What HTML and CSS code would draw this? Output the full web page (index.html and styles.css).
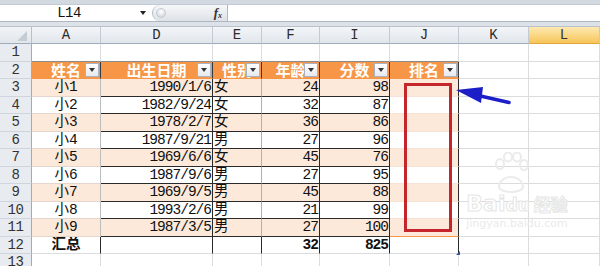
FILE: index.html
```html
<!DOCTYPE html>
<html>
<head>
<meta charset="utf-8">
<link rel="stylesheet" href="styles.css">
</head>
<body>
<div class="app">
  <div class="strip"></div>
  <div class="fbar">
    <div class="namebox">L14</div>
    <div class="nbarrow"><span class="tri"></span></div>
    <div class="fxcap"><span class="grip"></span><span class="fx">f<sub>x</sub></span></div>
    <div class="finput"></div>
  </div>
  <div class="gap"></div>
  <div class="sheet">
    <div class="corner"></div><div class="ch">A</div><div class="ch">D</div><div class="ch">E</div><div class="ch">F</div><div class="ch">I</div><div class="ch">J</div><div class="ch">K</div><div class="ch sel">L</div>

    <div class="rh">1</div><div class="c tt"></div><div class="c tt"></div><div class="c tt"></div><div class="c tt"></div><div class="c tt"></div><div class="c tt"></div><div class="c"></div><div class="c"></div>

    <div class="rh">2</div>
    <div class="c th"><span class="tht">姓名</span><span class="dd"></span></div>
    <div class="c th"><span class="tht">出生日期</span><span class="dd"></span></div>
    <div class="c th"><span class="tht">性别</span><span class="dd"></span></div>
    <div class="c th"><span class="tht">年龄</span><span class="dd"></span></div>
    <div class="c th"><span class="tht">分数</span><span class="dd"></span></div>
    <div class="c th"><span class="tht">排名</span><span class="dd"></span></div>
    <div class="c"></div><div class="c"></div>

    <div class="rh">3</div><div class="c ta band m">小1</div><div class="c td band r">1990/1/6</div><div class="c te band l">女</div><div class="c td band r">24</div><div class="c td band r">98</div><div class="c tj band"></div><div class="c"></div><div class="c"></div>
    <div class="rh">4</div><div class="c ta m">小2</div><div class="c td r">1982/9/24</div><div class="c te l">女</div><div class="c td r">32</div><div class="c td r">87</div><div class="c tj"></div><div class="c"></div><div class="c"></div>
    <div class="rh">5</div><div class="c ta band m">小3</div><div class="c td band r">1978/2/7</div><div class="c te band l">女</div><div class="c td band r">36</div><div class="c td band r">86</div><div class="c tj band"></div><div class="c"></div><div class="c"></div>
    <div class="rh">6</div><div class="c ta m">小4</div><div class="c td r">1987/9/21</div><div class="c te l">男</div><div class="c td r">27</div><div class="c td r">96</div><div class="c tj"></div><div class="c"></div><div class="c"></div>
    <div class="rh">7</div><div class="c ta band m">小5</div><div class="c td band r">1969/6/6</div><div class="c te band l">女</div><div class="c td band r">45</div><div class="c td band r">76</div><div class="c tj band"></div><div class="c"></div><div class="c"></div>
    <div class="rh">8</div><div class="c ta m">小6</div><div class="c td r">1987/9/6</div><div class="c te l">男</div><div class="c td r">27</div><div class="c td r">95</div><div class="c tj"></div><div class="c"></div><div class="c"></div>
    <div class="rh">9</div><div class="c ta band m">小7</div><div class="c td band r">1969/9/5</div><div class="c te band l">男</div><div class="c td band r">45</div><div class="c td band r">88</div><div class="c tj band"></div><div class="c"></div><div class="c"></div>
    <div class="rh">10</div><div class="c ta m">小8</div><div class="c td r">1993/2/6</div><div class="c te l">男</div><div class="c td r">21</div><div class="c td r">99</div><div class="c tj"></div><div class="c"></div><div class="c"></div>
    <div class="rh">11</div><div class="c ta band m">小9</div><div class="c td band r">1987/3/5</div><div class="c te band l">男</div><div class="c td band r">27</div><div class="c td band r">100</div><div class="c tj band last"></div><div class="c"></div><div class="c"></div>

    <div class="rh">12</div><div class="c tot m dk">汇总</div><div class="c tot dk"></div><div class="c tot dk"></div><div class="c tot r dk">32</div><div class="c tot r dk">825</div><div class="c tot dk"></div><div class="c"></div><div class="c"></div>

    <div class="rh">13</div><div class="c"></div><div class="c"></div><div class="c"></div><div class="c"></div><div class="c"></div><div class="c"></div><div class="c"></div><div class="c"></div>
  </div>

  <div class="redbox"></div>
  <svg class="arrow" width="60" height="24" viewBox="0 0 60 24">
    <polygon points="0,5 27,2 25,18" fill="#1c1fc8"/>
    <line x1="20" y1="10" x2="53" y2="17.5" stroke="#1c1fc8" stroke-width="3.5" stroke-linecap="round"/>
  </svg>
  <div class="handle"></div>
  <div class="wm">
    <svg class="paw" width="40" height="46" viewBox="0 0 40 46">
      <g fill="none" stroke="#ebebeb" stroke-width="2">
        <ellipse cx="9" cy="12" rx="4" ry="5"/>
        <ellipse cx="17" cy="5" rx="4" ry="4.5"/>
        <ellipse cx="26" cy="5" rx="4" ry="4.5"/>
        <ellipse cx="33" cy="13" rx="4" ry="5"/>
        <path d="M8 34 C10 22, 30 22, 32 34 C33 42, 7 42, 8 34 Z"/>
      </g>
    </svg>
    <div class="wm1">Bai<span class="du">du</span><span class="jy">经验</span></div>
    <div class="wm2">jingyan.baidu.com</div>
  </div>
</div>
</body>
</html>
```
FILE: styles.css
```css
html, body {
  margin: 0;
  padding: 0;
}
body {
  width: 600px;
  height: 266px;
  overflow: hidden;
  background: #fff;
  font-family: "Liberation Mono", "Noto Sans CJK SC", monospace;
}
.app {
  position: relative;
  width: 600px;
  height: 266px;
  overflow: hidden;
  background: #d9dee5;
}
.strip {
  height: 4px;
  background: #d3d9e1;
}
.fbar {
  display: flex;
  height: 18px;
  box-sizing: border-box;
  background: #fff;
  border-top: 1px solid #c3cad3;
  border-bottom: 1px solid #aeb7c2;
}
.namebox {
  width: 138px;
  display: flex;
  align-items: center;
  justify-content: center;
  font-size: 14px;
  color: #111;
  letter-spacing: -0.5px;
}
.nbarrow {
  width: 14px;
  display: flex;
  align-items: center;
  justify-content: center;
}
.tri {
  width: 0;
  height: 0;
  border-left: 3px solid transparent;
  border-right: 3px solid transparent;
  border-top: 4px solid #222;
  margin-right: 4px;
}
.fxcap {
  width: 75px;
  display: flex;
  align-items: center;
  justify-content: space-between;
  border-radius: 9px 0 0 9px;
  background: linear-gradient(#f6f7f9, #dde2e8);
  border-left: 1px solid #b3bcc7;
  box-sizing: border-box;
  padding: 0 5px 0 3px;
}
.grip {
  width: 8px;
  height: 8px;
  border-radius: 50%;
  background: radial-gradient(circle at 50% 35%, #ffffff, #c9cfd6);
  border: 1px solid #c4cad2;
}
.fx {
  font-family: "Liberation Serif", serif;
  font-style: italic;
  font-weight: bold;
  font-size: 13px;
  line-height: 1;
  color: #333;
}
.fx sub {
  font-size: 8px;
  vertical-align: -1px;
}
.finput {
  flex: 1;
  border-left: 1px solid #aeb7c2;
  background: #fff;
}
.gap {
  height: 5px;
  background: #dde2e8;
  border-bottom: 1px solid #b9c1cb;
  box-sizing: border-box;
}
.sheet {
  display: grid;
  grid-template-columns: 32px 69px 112px 49px 58px 70px 69px 70px 71px;
  grid-template-rows: 17px repeat(13, 17.5px);
  background: #fff;
}
.sheet > div {
  box-sizing: border-box;
  position: relative;
  display: flex;
  align-items: center;
  white-space: nowrap;
  overflow: hidden;
  line-height: 1;
}
.corner {
  background: linear-gradient(#f1f3f6, #e2e6ec);
  border-right: 1px solid #b8c0ca;
  border-bottom: 1px solid #9eabb9;
}
.corner::after {
  content: "";
  position: absolute;
  right: 4px;
  bottom: 2px;
  width: 0;
  height: 0;
  border-left: 10px solid transparent;
  border-bottom: 10px solid #c6ccd4;
}
.ch {
  justify-content: center;
  font-size: 14px;
  color: #2b2b2b;
  background: linear-gradient(#f3f5f8, #e1e6ec);
  border-right: 1px solid #c3cad3;
  border-bottom: 1px solid #9eabb9;
}
.ch.sel {
  background: linear-gradient(#fde9b0, #f6c55a);
  border-bottom: 1px solid #e3a83c;
  color: #333;
}
.rh {
  justify-content: center;
  font-size: 14px;
  color: #333;
  background: #e8ecf1;
  border-right: 1px solid #9eabb9;
  border-bottom: 1px solid #cfd5dc;
  letter-spacing: -0.5px;
}
.c {
  border-right: 1px solid #dadcdd;
  border-bottom: 1px solid #dadcdd;
  font-size: 14.5px;
  color: #111;
}
.tt {
  border-bottom: 1px solid #8a8a8a;
}
.sheet > .th {
  justify-content: center;
  background: #f79646;
  color: #fff;
  font-weight: bold;
  font-size: 15px;
  font-family: "Noto Sans CJK SC", sans-serif;
  border-right: 1px solid #3a3a3a;
  border-bottom: 1px solid #f79646;
  overflow: visible;
}
.tht {
  display: block;
  height: 15px;
  line-height: 15px;
}
.dd {
  position: absolute;
  right: 1px;
  bottom: 1px;
  width: 14px;
  height: 14px;
  box-sizing: border-box;
  background: linear-gradient(#ffffff, #e6e9ee);
  border: 1px solid #a9b2be;
}
.dd::after {
  content: "";
  position: absolute;
  left: 3px;
  top: 4px;
  border-left: 3.5px solid transparent;
  border-right: 3.5px solid transparent;
  border-top: 4px solid #333;
}
.band {
  background: #fde9d9;
}
.ta {
  border-right: 1px solid #bdbdbd;
  border-bottom: 1px solid #e4d6cc;
}
.td {
  border-right: 1px solid #2a2a2a;
  border-bottom: 1px solid #2a2a2a;
}
.te {
  border-right: 1px solid #b0b0b0;
  border-bottom: 1px solid #2a2a2a;
}
.tj {
  border-right: 1px solid #2a2a2a;
  border-bottom: 1px solid #f6e3d6;
}
.tj.last {
  border-bottom: 1px solid #f79646;
}
.tot {
  font-weight: bold;
}
.dk {
  border-right: 1px solid #2a2a2a;
}
.m {
  justify-content: center;
}
.r {
  justify-content: flex-end;
  padding-right: 1px;
  letter-spacing: -1px;
}
.l {
  justify-content: flex-start;
  padding-left: 1px;
}
.redbox {
  position: absolute;
  left: 404px;
  top: 83px;
  width: 48px;
  height: 149px;
  box-sizing: border-box;
  border: 3px solid #c4262c;
}
.arrow {
  position: absolute;
  left: 456px;
  top: 85px;
}
.handle {
  position: absolute;
  left: 456px;
  top: 251px;
  width: 0;
  height: 0;
  border-left: 4px solid transparent;
  border-bottom: 4px solid #3a55a0;
}
.wm {
  position: absolute;
  left: 462px;
  top: 152px;
  width: 110px;
  display: flex;
  flex-direction: column;
  align-items: center;
  white-space: nowrap;
}
.paw {
  margin-left: -12px;
}
.wm1 {
  font-family: "DejaVu Sans", sans-serif;
  font-weight: bold;
  font-size: 22px;
  line-height: 24px;
  color: #ffffff;
  -webkit-text-stroke: 1px #e6e6e6;
  margin-top: -6px;
  white-space: nowrap;
}
.wm1 .du {
  font-size: 17px;
}
.wm1 .jy {
  font-family: "Noto Sans CJK SC", sans-serif;
  font-size: 17px;
  margin-left: 4px;
}
.wm2 {
  font-family: "DejaVu Sans", sans-serif;
  font-size: 11px;
  color: #eaeaea;
  line-height: 14px;
  white-space: nowrap;
}
```
